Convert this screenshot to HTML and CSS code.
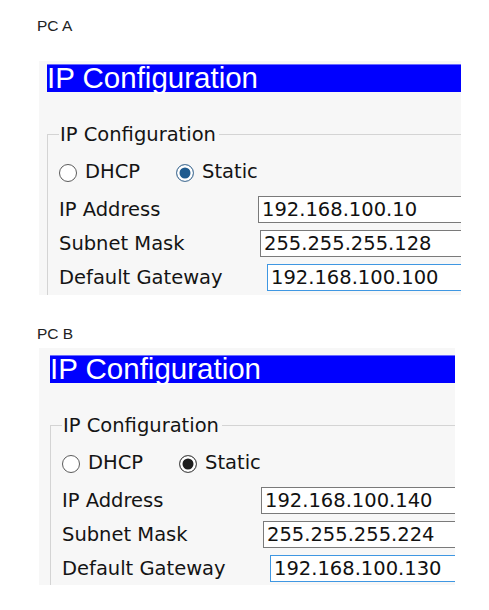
FILE: index.html
```html
<!DOCTYPE html>
<html lang="en">
<head>
    <meta charset="UTF-8">
    <meta name="viewport" content="width=device-width, initial-scale=1.0">
    <title>PC IP Configuration</title>
    <link rel="stylesheet" href="styles.css">
</head>
<body>

    <p class="caption caption-a">PC A</p>
    <div class="panel panel-a">
        <h2 class="banner">IP Configuration</h2>
        <fieldset class="group">
            <legend>IP Configuration</legend>
            <div class="radios">
                <span class="radio"></span><span class="radio-label">DHCP</span>
                <span class="radio checked"></span><span class="radio-label">Static</span>
            </div>
            <div class="row first">
                <span class="label">IP Address</span>
                <div class="field">192.168.100.10</div>
            </div>
            <div class="row">
                <span class="label">Subnet Mask</span>
                <div class="field field-mask">255.255.255.128</div>
            </div>
            <div class="row">
                <span class="label">Default Gateway</span>
                <div class="field field-gateway">192.168.100.100</div>
            </div>
        </fieldset>
    </div>

    <p class="caption caption-b">PC B</p>
    <div class="panel panel-b">
        <h2 class="banner">IP Configuration</h2>
        <fieldset class="group">
            <legend>IP Configuration</legend>
            <div class="radios">
                <span class="radio"></span><span class="radio-label">DHCP</span>
                <span class="radio checked"></span><span class="radio-label">Static</span>
            </div>
            <div class="row first">
                <span class="label">IP Address</span>
                <div class="field">192.168.100.140</div>
            </div>
            <div class="row">
                <span class="label">Subnet Mask</span>
                <div class="field field-mask">255.255.255.224</div>
            </div>
            <div class="row">
                <span class="label">Default Gateway</span>
                <div class="field field-gateway">192.168.100.130</div>
            </div>
        </fieldset>
    </div>

</body>
</html>
```

FILE: styles.css
```css
body {
    margin: 0;
    padding: 17px 0 0 37px;
    background-color: #fff;
}
.caption {
    margin: 0;
    font: 15.5px/18px "Liberation Sans", Arial, sans-serif;
    color: #222;
}
.caption-b {
    margin-top: 30px;
}
.panel {
    box-sizing: border-box;
    margin-left: 2px;
    background-color: #f7f7f7;
    overflow: hidden;
    font-family: "DejaVu Sans", Verdana, sans-serif;
    font-size: 19.5px;
    color: #141414;
}
.panel-a {
    margin-top: 26px;
    width: 422px;
    height: 234px;
    padding: 3px 0 0 8px;
}
.panel-b {
    margin-top: 5px;
    width: 416px;
    height: 237px;
    padding: 7px 0 0 11px;
}
.banner {
    margin: 0;
    height: 28px;
    background-color: #0000ff;
    border-top: 1px solid #6b6bff;
    box-sizing: border-box;
    color: #fff;
    font: normal 29.5px/26px "Liberation Sans", Arial, sans-serif;
    white-space: nowrap;
}
.group {
    margin: 30px -80px 0 0;
    padding: 0 0 12px 11px;
    border: 1px solid #d4d4d4;
    min-width: 0;
}
.group legend {
    padding: 2px 3px 0 1px;
    line-height: 22px;
}
.radios {
    display: flex;
    align-items: center;
    height: 34px;
    margin-top: 8px;
}
.radio {
    box-sizing: border-box;
    width: 18px;
    height: 18px;
    margin: 3px 8px 0 0;
    border: 1.5px solid #5c5c5c;
    border-radius: 50%;
    background-color: #fff;
}
.radio-label + .radio {
    margin-left: 36px;
}
.panel-a .radio.checked {
    border-color: #5a7d9e;
    background-color: #1f5b8f;
    box-shadow: inset 0 0 0 2.5px #fff;
}
.panel-b .radio.checked {
    border-color: #555;
    background-color: #1e1e1e;
    box-shadow: inset 0 0 0 2.5px #fff;
}
.row {
    display: flex;
    align-items: center;
    height: 34px;
}
.row.first {
    margin-top: 4px;
}
.label {
    flex: none;
    width: 199px;
    white-space: nowrap;
}
.field {
    flex: 1;
    box-sizing: border-box;
    height: 27px;
    padding: 0 3px;
    border: 1px solid #7a7a7a;
    background-color: #fff;
    line-height: 25px;
    color: #111;
    white-space: nowrap;
}
.field-mask {
    margin-left: 2px;
}
.field-gateway {
    margin-left: 9px;
    border-color: #3f97e2;
}
```
